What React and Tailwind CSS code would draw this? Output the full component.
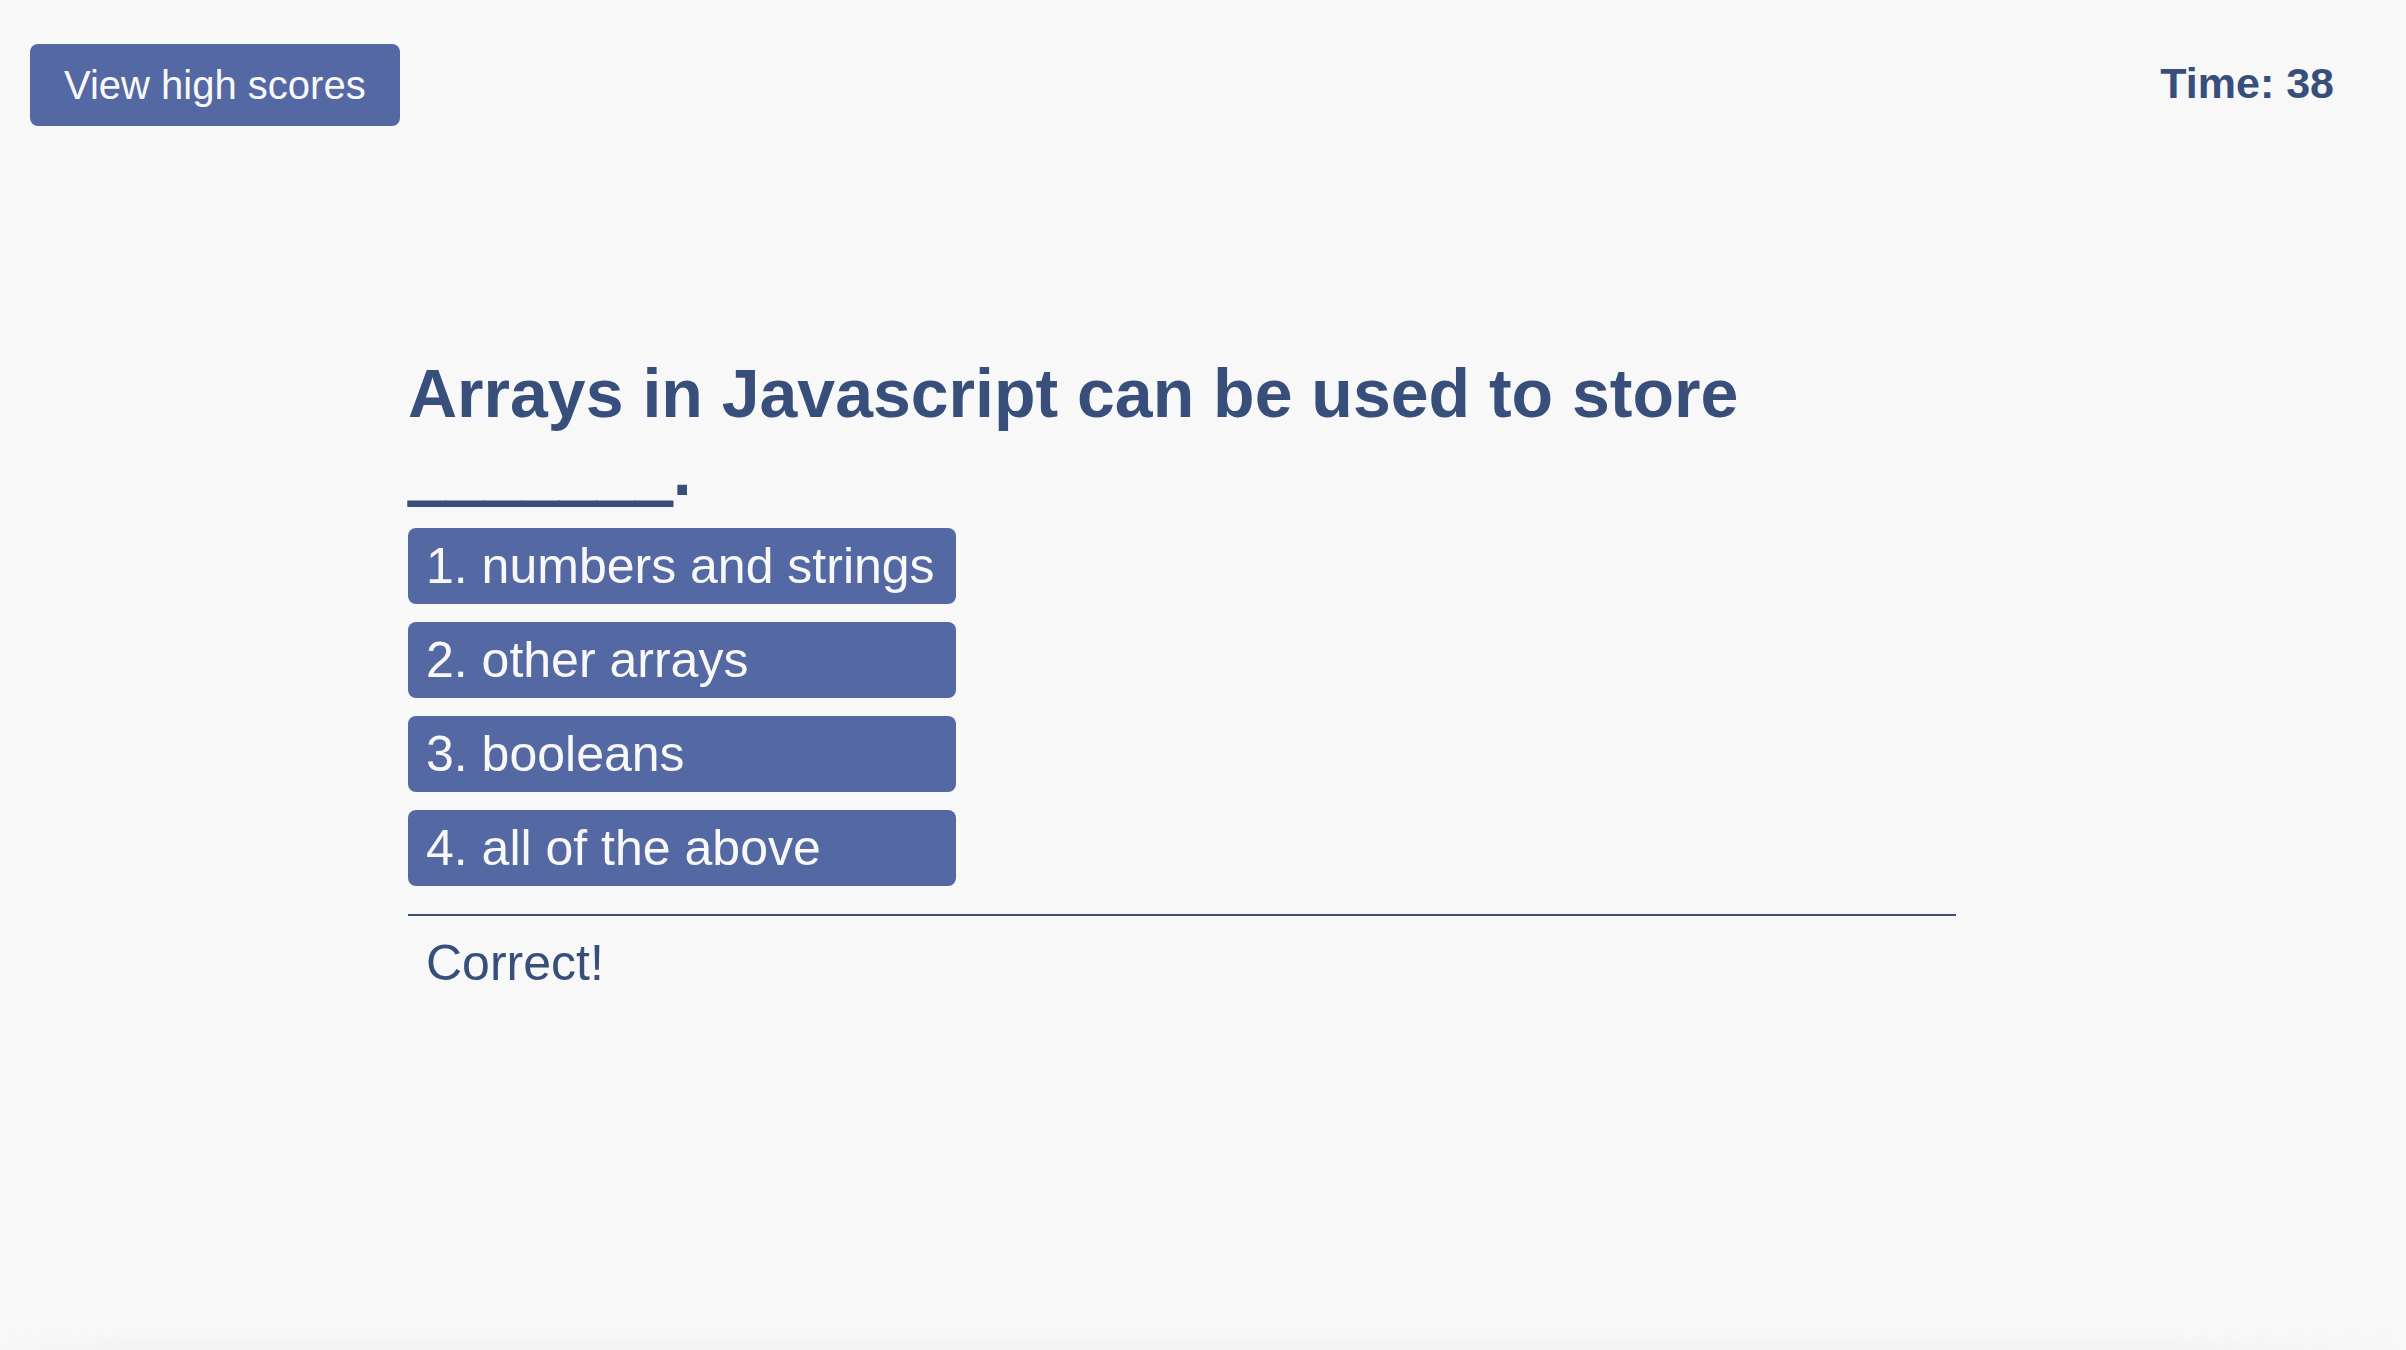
const choices = ["numbers and strings", "other arrays", "booleans", "all of the above"];

export default function App() {
  return (
    <div className="flex min-h-screen flex-col bg-[#f8f8f8] font-['Liberation_Sans',Arial,sans-serif] text-[#374f7a]">
      <header className="flex items-start justify-between pt-11 pr-[72px] pl-[30px]">
        <button
          type="button"
          className="rounded-lg bg-[#5468a3] px-[34px] py-[18px] text-[40px] leading-[46px] text-[#f8f8f8]"
        >
          View high scores
        </button>
        <p className="pt-[14px] text-[43px] leading-[50px] font-bold">Time: 38</p>
      </header>

      <main className="mt-[228px] mr-[450px] ml-[408px]">
        <h1 className="text-[68px] leading-[78px] font-bold">
          Arrays in Javascript can be used to store{" "}
          <span className="[text-shadow:0_2px_currentColor,0_4px_currentColor]">_______</span>.
        </h1>
        <ol className="mt-[18px] grid w-fit min-w-[548px] gap-[18px]">
          {choices.map((choice, i) => (
            <li key={choice} className="grid">
              <button
                type="button"
                className="rounded-lg bg-[#5468a3] px-[18px] py-[9px] text-left text-[50px] leading-[58px] text-[#f8f8f8]"
              >
                {i + 1}. {choice}
              </button>
            </li>
          ))}
        </ol>
        <p className="mt-7 border-t-2 border-[#374f7a] px-[18px] py-[18px] text-[50px] leading-[58px]">
          Correct!
        </p>
      </main>

      <div className="mt-auto h-5 bg-linear-to-b from-[#f8f8f8] to-[#f2f2f2] [mask-image:linear-gradient(to_right,transparent,black_120px,black_calc(100%-240px),transparent)]" />
    </div>
  );
}
